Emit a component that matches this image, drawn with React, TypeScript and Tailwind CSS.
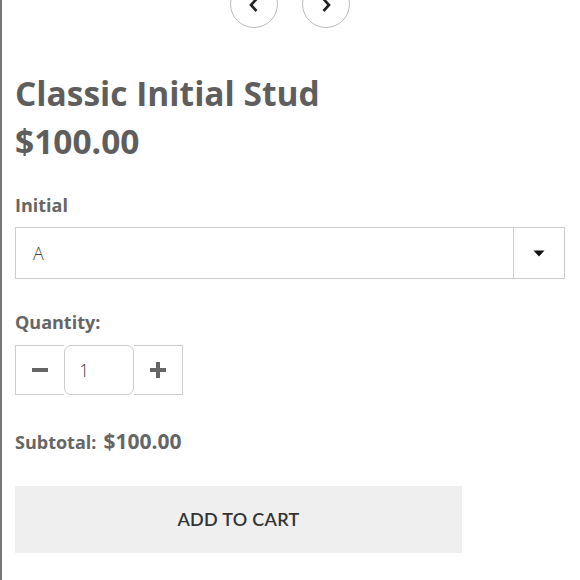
import React from "react";

export default function App() {
  const os = { fontFamily: '"Open Sans", "Liberation Sans", sans-serif' };
  return (
    <div className="h-[580px] w-[580px] overflow-hidden border-l-2 border-[#777] bg-white pl-[13px] pr-[15px]" style={os}>
      <div className="mt-[-20px] flex justify-center gap-6">
        <button className="flex h-[48px] w-[48px] items-center justify-center rounded-full border border-[#bbb] bg-white pt-[2px]">
          <svg width="14" height="16" viewBox="0 0 14 16"><path d="M9.5 2 L4 8 L9.5 14" fill="none" stroke="#222" strokeWidth="2.6" /></svg>
        </button>
        <button className="flex h-[48px] w-[48px] items-center justify-center rounded-full border border-[#bbb] bg-white pt-[2px]">
          <svg width="14" height="16" viewBox="0 0 14 16"><path d="M4.5 2 L10 8 L4.5 14" fill="none" stroke="#222" strokeWidth="2.6" /></svg>
        </button>
      </div>
      <h1 className="mt-[46px] text-[33.5px] font-bold leading-[38px] text-[#5e5e5e]">Classic Initial Stud</h1>
      <div className="mt-[10px] text-[33.5px] font-bold leading-[38px] text-[#5e5e5e]">$100.00</div>
      <div className="mt-[33px] text-[18px] font-bold leading-[24px] text-[#666]">Initial</div>
      <div className="mt-[10px] flex h-[52px] border border-[#ccc]">
        <div className="flex flex-1 items-center pl-[17px] text-[18px] font-light text-[#444]">A</div>
        <div className="flex w-[51px] items-center justify-center border-l border-[#ccc]">
          <svg width="12" height="7" viewBox="0 0 12 7"><path d="M0.5 0.5 L11.5 0.5 L6 6.5 Z" fill="#111" /></svg>
        </div>
      </div>
      <div className="mt-[31px] text-[18px] font-bold leading-[24px] text-[#666]">Quantity:</div>
      <div className="mt-[11px] flex h-[50px]">
        <button className="flex w-[49px] items-center justify-center border-y border-l border-[#ccc]">
          <svg width="16" height="4" viewBox="0 0 16 4"><rect width="16" height="4" fill="#666" /></svg>
        </button>
        <div className="flex w-[70px] items-center rounded-[7px] border border-[#ccc] pl-[14px] text-[18px] font-light text-[#444]">1</div>
        <button className="flex w-[49px] items-center justify-center border-y border-r border-[#ccc]">
          <svg width="16" height="16" viewBox="0 0 16 16"><rect x="6" y="0" width="4" height="16" fill="#666" /><rect x="0" y="6" width="16" height="4" fill="#666" /></svg>
        </button>
      </div>
      <div className="mt-[31px] flex items-baseline gap-[7px] text-[#666]">
        <span className="text-[18px] font-bold">Subtotal:</span>
        <span className="text-[21px] font-bold">$100.00</span>
      </div>
      <button
        className="mt-[28px] flex h-[67px] w-[447px] items-center justify-center bg-[#efefef] text-[18px] font-semibold tracking-[0.3px] text-[#333]"
        style={{ fontFamily: 'Lato, "Liberation Sans", sans-serif' }}
      >
        ADD TO CART
      </button>
    </div>
  );
}
